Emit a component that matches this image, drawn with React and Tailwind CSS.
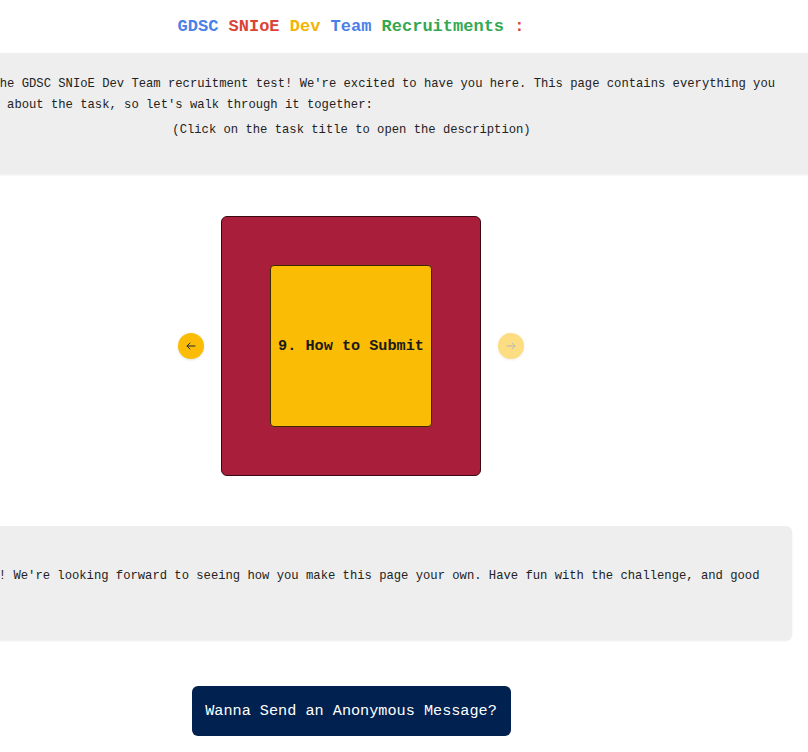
import React, { useState } from "react";

const TASKS = [
  "1. Introduction",
  "2. Getting Started",
  "3. The Layout",
  "4. Styling",
  "5. Interactivity",
  "6. Responsiveness",
  "7. Bonus Points",
  "8. Deadline",
  "9. How to Submit",
];

const Arrow = ({ dir, disabled, onClick }) => (
  <button
    onClick={onClick}
    className={
      "flex h-[26px] w-[26px] items-center justify-center rounded-full bg-[#fbbc05] shadow-sm " +
      (disabled ? "opacity-50 text-gray-500" : "text-gray-800")
    }
  >
    <svg className="h-3 w-3" fill="none" stroke="currentColor" viewBox="0 0 24 24">
      {dir === "left" ? (
        <path strokeLinecap="round" strokeLinejoin="round" strokeWidth={2} d="M20 12H4M10 6l-6 6 6 6" />
      ) : (
        <path strokeLinecap="round" strokeLinejoin="round" strokeWidth={2} d="M4 12h16M14 6l6 6-6 6" />
      )}
    </svg>
  </button>
);

export default function App() {
  const [idx, setIdx] = useState(TASKS.length - 1);

  return (
    <div
      className="min-h-screen w-full overflow-hidden bg-white text-[#222]"
      style={{ fontFamily: '"Liberation Mono", "DejaVu Sans Mono", monospace' }}
    >
      <div className="-ml-[105px] flex w-[912px] flex-col">
        {/* Header */}
        <div className="flex h-[53px] items-center justify-center text-[17px] font-bold">
          <span className="text-[#4a80e8]">GDSC</span>
          <span>&nbsp;</span>
          <span className="text-[#db4437]">SNIoE</span>
          <span>&nbsp;</span>
          <span className="text-[#f4b400]">Dev</span>
          <span>&nbsp;</span>
          <span className="text-[#4a80e8]">Team</span>
          <span>&nbsp;</span>
          <span className="text-[#34a853]">Recruitments</span>
          <span>&nbsp;</span>
          <span className="text-[#db4437]">:</span>
        </div>

        {/* Intro */}
        <div className="-mr-2 h-[121px] bg-[#eeeeee] pr-6 pl-[17px] pt-[21px] shadow-[0_1px_2px_rgba(0,0,0,0.08)]">
          <p className="whitespace-nowrap text-[12.2px] leading-[21px]">
            Welcome to the GDSC SNIoE Dev Team recruitment test! We're excited to have you here. This page contains everything you
            <br />
            need to know about the task, so let's walk through it together:
          </p>
          <p className="mt-1 whitespace-nowrap text-center text-[12.2px] leading-[21px]">
            (Click on the task title to open the description)
          </p>
        </div>

        {/* Task carousel */}
        <div className="flex items-center justify-center gap-[17px] pt-[42px] pb-[50px]">
          <Arrow dir="left" disabled={idx === 0} onClick={() => setIdx((i) => Math.max(0, i - 1))} />
          <div className="flex h-[260px] w-[260px] items-center justify-center rounded-md border border-[#3a0a14] bg-[#a81e3b]">
            <div className="flex h-[162px] w-[162px] items-center justify-center rounded-[4px] border border-[#3a2a00] bg-[#fbbc05]">
              <span className="whitespace-nowrap text-[15.2px] font-bold text-[#1a1a1a]">{TASKS[idx]}</span>
            </div>
          </div>
          <Arrow
            dir="right"
            disabled={idx === TASKS.length - 1}
            onClick={() => setIdx((i) => Math.min(TASKS.length - 1, i + 1))}
          />
        </div>

        {/* Outro */}
        <div className="ml-4 mr-[15px] flex h-[114px] items-center rounded-md bg-[#eeeeee] px-4 pb-[14px] shadow-[0_1px_2px_rgba(0,0,0,0.08)]">
          <p className="whitespace-nowrap pl-[6px] text-[12.2px] leading-[21px]">
            Good luck! We're looking forward to seeing how you make this page your own. Have fun with the challenge, and good
          </p>
        </div>

        {/* CTA */}
        <div className="flex justify-center pt-[46px] pb-4">
          <button className="h-[50px] w-[319px] rounded-md bg-[#012150] text-[15.2px] text-white">
            Wanna Send an Anonymous Message?
          </button>
        </div>
      </div>
    </div>
  );
}
